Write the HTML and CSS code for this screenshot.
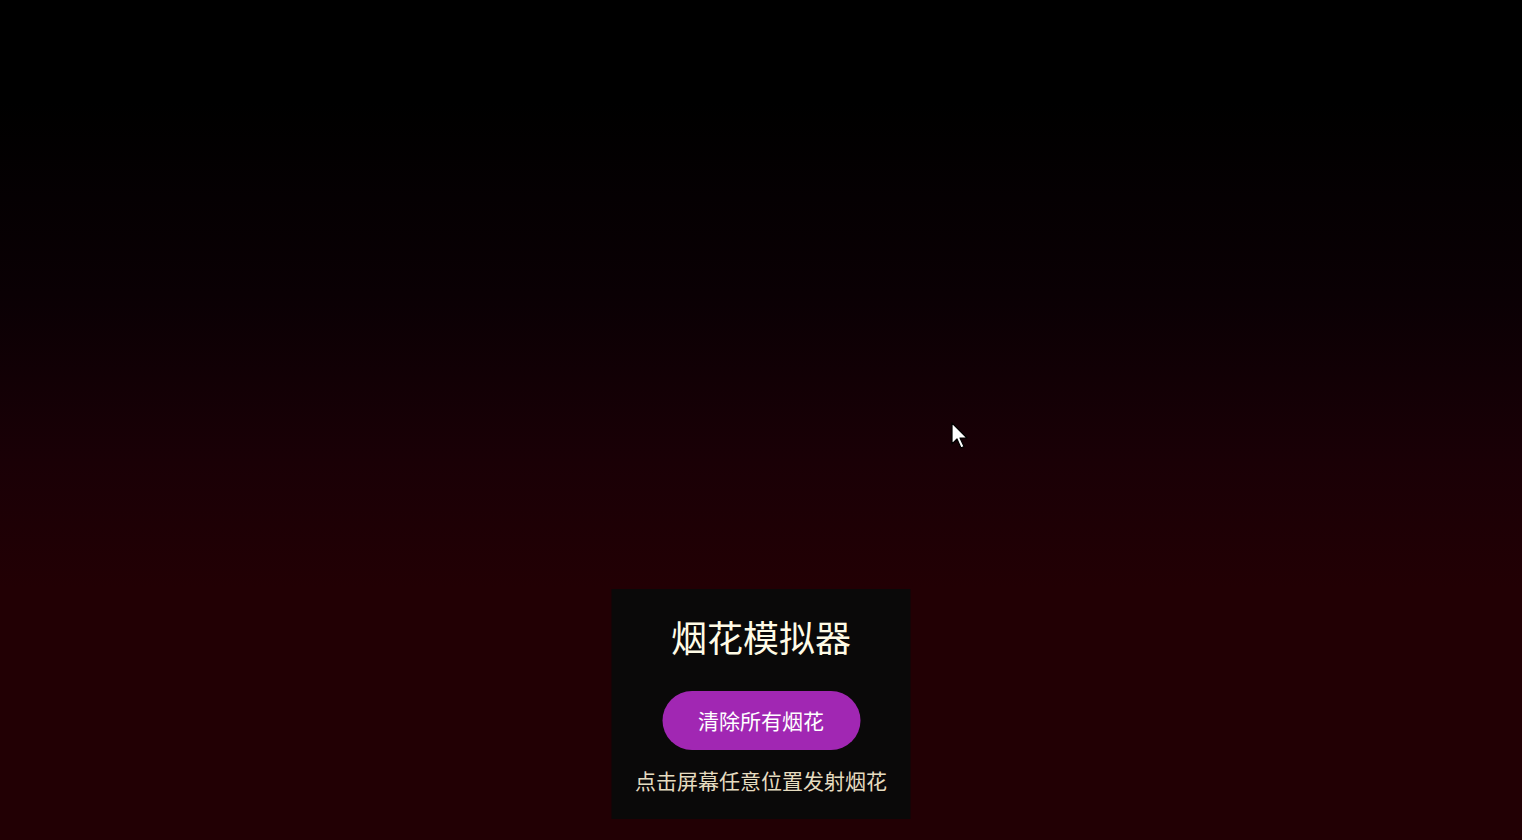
FILE: index.html
```html
<!DOCTYPE html>
<html lang="zh-CN">
<head>
<meta charset="utf-8">
<title>烟花模拟器</title>
<link rel="stylesheet" href="styles.css">
</head>
<body>
<div class="stage"></div>
<div class="panel">
  <h1 class="title">烟花模拟器</h1>
  <button class="clear-btn">清除所有烟花</button>
  <p class="hint">点击屏幕任意位置发射烟花</p>
</div>
<svg class="cursor" width="20" height="28" viewBox="0 0 20 28">
  <path d="M1 1 L1 22 L6 17 L10 26 L13 24.5 L9 16 L16 16 Z" fill="#fff" stroke="#000" stroke-width="1.2" stroke-linejoin="round"/>
</svg>
</body>
</html>
```
FILE: styles.css
```css
html, body {
  margin: 0;
  padding: 0;
  width: 100%;
  height: 100%;
  overflow: hidden;
}
body {
  background: linear-gradient(to bottom, #000 0%, #000 12%, #0a0004 35%, #1a0006 55%, #220004 70%, #220004 100%);
  font-family: "Noto Sans CJK SC", "Noto Sans", sans-serif;
}
.stage {
  width: 100%;
  height: 100%;
}
.panel {
  position: absolute;
  left: 50%;
  bottom: 21px;
  transform: translateX(-50%);
  width: 299px;
  box-sizing: border-box;
  padding: 20px 0 24px;
  background: rgba(10, 10, 10, 0.95);
  display: flex;
  flex-direction: column;
  align-items: center;
}
.title {
  margin: 0;
  font-size: 36px;
  font-weight: 400;
  line-height: 54px;
  color: #fffbe6;
}
.clear-btn {
  margin-top: 28px;
  height: 59px;
  padding: 0 36px;
  border: none;
  border-radius: 30px;
  background: #a127b3;
  color: #fff;
  font-family: inherit;
  font-size: 21px;
  line-height: 59px;
}
.hint {
  margin: 15px 0 0;
  font-size: 21px;
  line-height: 30px;
  color: #e6dcc0;
}
.cursor {
  position: absolute;
  left: 951px;
  top: 422px;
}
```
